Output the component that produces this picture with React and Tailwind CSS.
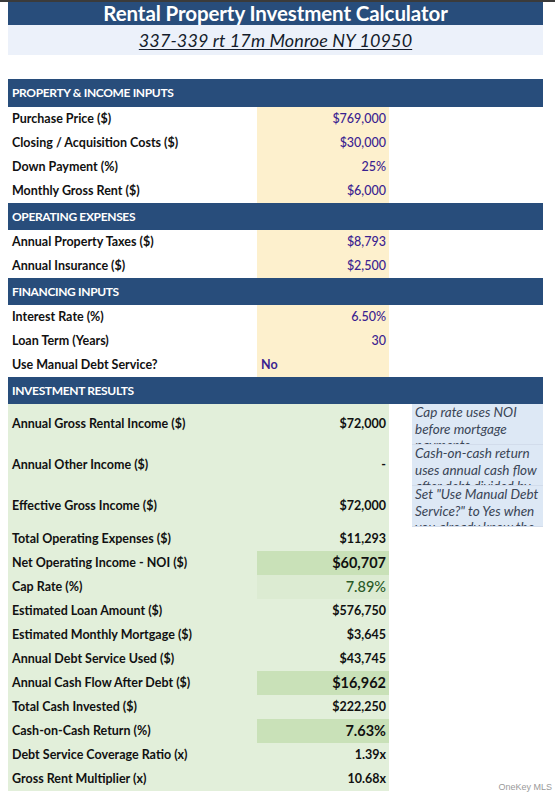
import React from "react";

const H = ({ children, h = "h-[27px]" }) => (
  <div className={`${h} bg-[#284d7b] flex items-center pl-[4px] text-white font-bold text-[12px] tracking-[-0.35px]`}>
    {children}
  </div>
);

const InRow = ({ label, value, left }) => (
  <div className="grid grid-cols-[249px_132px_154px] h-[24px]">
    <div className="flex items-center pl-[4px] text-[12.5px] font-bold text-[#111]">{label}</div>
    <div
      className={`bg-[#fdf0cd] flex items-center text-[12.5px] text-[#3a2290] ${
        left ? "justify-start pl-[4px] font-bold" : "justify-end pr-[3px] font-medium"
      }`}
    >
      {value}
    </div>
    <div />
  </div>
);

const tall = [
  {
    label: "Annual Gross Rental Income ($)",
    value: "$72,000",
    note: ["Cap rate uses NOI", "before mortgage", "payments."],
  },
  {
    label: "Annual Other Income ($)",
    value: "-",
    note: ["Cash-on-cash return", "uses annual cash flow", "after debt divided by"],
  },
  {
    label: "Effective Gross Income ($)",
    value: "$72,000",
    note: ['Set "Use Manual Debt', 'Service?" to Yes when', "you already know the"],
  },
];

const rows = [
  { label: "Total Operating Expenses ($)", value: "$11,293" },
  { label: "Net Operating Income - NOI ($)", value: "$60,707", big: true, hl: "bg-[#c9e1b8]" },
  { label: "Cap Rate (%)", value: "7.89%", big: true, hl: "bg-[#dcebd2]", green: true },
  { label: "Estimated Loan Amount ($)", value: "$576,750" },
  { label: "Estimated Monthly Mortgage ($)", value: "$3,645" },
  { label: "Annual Debt Service Used ($)", value: "$43,745" },
  { label: "Annual Cash Flow After Debt ($)", value: "$16,962", big: true, hl: "bg-[#c9e1b8]" },
  { label: "Total Cash Invested ($)", value: "$222,250" },
  { label: "Cash-on-Cash Return (%)", value: "7.63%", big: true, hl: "bg-[#c9e1b8]" },
  { label: "Debt Service Coverage Ratio (x)", value: "1.39x" },
  { label: "Gross Rent Multiplier (x)", value: "10.68x" },
];

export default function App() {
  return (
    <div className="relative w-[555px] h-[800px] bg-white overflow-hidden font-['Lato',sans-serif]">
      <div className="h-[2px] bg-[#3b3b3b]" />
      <div className="ml-[8px] w-[535px]">
        <div className="h-[23px] bg-[#284d7b] flex items-center justify-center text-white font-bold text-[20.5px] leading-none tracking-[-0.1px]">
          Rental Property Investment Calculator
        </div>
        <div className="h-[30px] bg-[#ecf1fa] flex items-center justify-center">
          <span className="italic underline underline-offset-[2px] decoration-[1px] text-[18px] text-[#141c2b] tracking-[0.1px]">
            337-339 rt 17m Monroe NY 10950
          </span>
        </div>
        <div className="h-[24px]" />

        <H h="h-[28px]">PROPERTY &amp; INCOME INPUTS</H>
        <InRow label="Purchase Price ($)" value="$769,000" />
        <InRow label="Closing / Acquisition Costs ($)" value="$30,000" />
        <InRow label="Down Payment (%)" value="25%" />
        <InRow label="Monthly Gross Rent ($)" value="$6,000" />

        <H>OPERATING EXPENSES</H>
        <InRow label="Annual Property Taxes ($)" value="$8,793" />
        <InRow label="Annual Insurance ($)" value="$2,500" />

        <H>FINANCING INPUTS</H>
        <InRow label="Interest Rate (%)" value="6.50%" />
        <InRow label="Loan Term (Years)" value="30" />
        <InRow label="Use Manual Debt Service?" value="No" left />

        <H>INVESTMENT RESULTS</H>
        {tall.map((r) => (
          <div key={r.label} className="grid grid-cols-[249px_132px_23px_131px] h-[41px]">
            <div className="bg-[#e2efda] flex items-center pl-[4px] text-[12.5px] font-bold text-[#111]">
              {r.label}
            </div>
            <div className="bg-[#e2efda] flex items-center justify-end pr-[3px] text-[12.5px] font-bold text-[#111]">
              {r.value}
            </div>
            <div />
            <div className="bg-[#dde8f5] overflow-hidden border-b border-[#d2dceb] pl-[3px]">
              {r.note.map((l) => (
                <div key={l} className="italic text-[13.5px] leading-[16.5px] text-[#3a4556] whitespace-nowrap">
                  {l}
                </div>
              ))}
            </div>
          </div>
        ))}
        {rows.map((r) => (
          <div key={r.label} className="grid grid-cols-[249px_132px_154px] h-[24px]">
            <div className="bg-[#e2efda] flex items-center pl-[4px] text-[12.5px] font-bold text-[#111]">
              {r.label}
            </div>
            <div className="bg-[#e2efda] flex">
              <div
                className={`flex-1 flex items-center justify-end pr-[3px] ${r.hl || ""} ${
                  r.big ? "text-[14.5px]" : "text-[12.5px]"
                } ${r.green ? "text-[#2b5a27] font-medium" : "text-[#111] font-bold"}`}
              >
                {r.value}
              </div>
            </div>
            <div />
          </div>
        ))}
      </div>
      <div className="absolute right-[3px] bottom-[6px] text-[9px] text-[#9a9a9a] font-['Liberation_Sans',sans-serif]">
        OneKey MLS
      </div>
    </div>
  );
}
